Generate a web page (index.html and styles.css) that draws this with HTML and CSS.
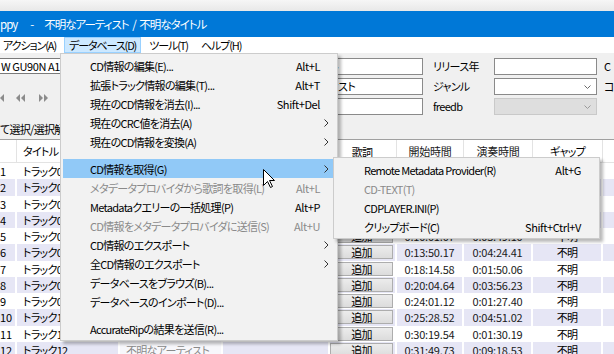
FILE: index.html
```html
<!DOCTYPE html>
<html lang="ja">
<head>
    <meta charset="UTF-8">
    <title>CD情報</title>
    <link rel="stylesheet" href="styles.css">
</head>
<body>
    <div class="topstrip"></div>
    <div class="titlebar"><span>ppy</span><span class="dash">-</span><span>不明なアーティスト / 不明なタイトル</span></div>
    <div class="menubar">
        <span class="mb-item first">アクション(A)</span>
        <span class="mb-item open">データベース(D)</span>
        <span class="mb-item">ツール(T)</span>
        <span class="mb-item">ヘルプ(H)</span>
    </div>

    <div class="panel">
        <div class="left">
            <div class="drive">W GU90N A1C</div>
            <svg class="transport" width="62" height="10" viewBox="0 0 62 10">
                <polygon points="4,1 0,5 4,9" fill="#8c8c8c"/>
                <polygon points="20,1 16,5 20,9" fill="#8c8c8c"/>
                <polygon points="25,1 21,5 25,9" fill="#8c8c8c"/>
                <polygon points="39,1 43,5 39,9" fill="#8c8c8c"/>
                <polygon points="44,1 48,5 44,9" fill="#8c8c8c"/>
            </svg>
            <div class="selectall">て選択/選択解除</div>
        </div>
        <div class="form">
            <div class="field">不明なタイトル</div>
            <div class="label">リリース年</div>
            <div class="field"></div>
            <div class="label edge">C</div>

            <div class="field">不明なアーティスト</div>
            <div class="label">ジャンル</div>
            <div class="field combo"><svg width="7" height="4" viewBox="0 0 7 4"><path d="M0.5 0.5 L3.5 3.5 L6.5 0.5" fill="none" stroke="#6a6a6a"/></svg></div>
            <div class="label edge">コ</div>

            <div class="field"></div>
            <div class="label">freedb</div>
            <div class="field combo disabled"><svg width="7" height="4" viewBox="0 0 7 4"><path d="M0.5 0.5 L3.5 3.5 L6.5 0.5" fill="none" stroke="#9a9a9a"/></svg></div>
            <div class="label edge"></div>
        </div>
    </div>

    <div class="tracks">
        <div class="row head">
            <div class="c num"></div>
            <div class="c title">タイトル</div>
            <div class="c artist">アーティスト</div>
            <div class="c composer">作曲者</div>
            <div class="c lyric center">歌詞</div>
            <div class="c time center">開始時間</div>
            <div class="c len center">演奏時間</div>
            <div class="c gap center">ギャップ</div>
            <div class="c more"></div>
        </div>
        <div class="row"><div class="c num">1</div><div class="c title">トラック01</div><div class="c artist">不明なアーティスト</div><div class="c composer"></div><div class="c lyric"><span class="btn">追加</span></div><div class="c time center">0:00:02.00</div><div class="c len center">0:03:25.15</div><div class="c gap center">不明</div><div class="c more"></div></div>
        <div class="row alt"><div class="c num">2</div><div class="c title">トラック02</div><div class="c artist">不明なアーティスト</div><div class="c composer"></div><div class="c lyric"><span class="btn">追加</span></div><div class="c time center">0:03:27.15</div><div class="c len center">0:02:58.40</div><div class="c gap center">不明</div><div class="c more"></div></div>
        <div class="row"><div class="c num">3</div><div class="c title">トラック03</div><div class="c artist">不明なアーティスト</div><div class="c composer"></div><div class="c lyric"><span class="btn">追加</span></div><div class="c time center">0:06:25.55</div><div class="c len center">0:01:44.30</div><div class="c gap center">不明</div><div class="c more"></div></div>
        <div class="row alt"><div class="c num">4</div><div class="c title">トラック04</div><div class="c artist">不明なアーティスト</div><div class="c composer"></div><div class="c lyric"><span class="btn">追加</span></div><div class="c time center">0:08:10.10</div><div class="c len center">0:01:50.72</div><div class="c gap center">不明</div><div class="c more"></div></div>
        <div class="row"><div class="c num">5</div><div class="c title">トラック05</div><div class="c artist">不明なアーティスト</div><div class="c composer"></div><div class="c lyric"><span class="btn">追加</span></div><div class="c time center">0:10:01.07</div><div class="c len center">0:03:49.10</div><div class="c gap center">不明</div><div class="c more"></div></div>
        <div class="row alt"><div class="c num">6</div><div class="c title">トラック06</div><div class="c artist">不明なアーティスト</div><div class="c composer"></div><div class="c lyric"><span class="btn">追加</span></div><div class="c time center">0:13:50.17</div><div class="c len center">0:04:24.41</div><div class="c gap center">不明</div><div class="c more"></div></div>
        <div class="row"><div class="c num">7</div><div class="c title">トラック07</div><div class="c artist">不明なアーティスト</div><div class="c composer"></div><div class="c lyric"><span class="btn">追加</span></div><div class="c time center">0:18:14.58</div><div class="c len center">0:01:50.06</div><div class="c gap center">不明</div><div class="c more"></div></div>
        <div class="row alt"><div class="c num">8</div><div class="c title">トラック08</div><div class="c artist">不明なアーティスト</div><div class="c composer"></div><div class="c lyric"><span class="btn">追加</span></div><div class="c time center">0:20:04.64</div><div class="c len center">0:03:56.23</div><div class="c gap center">不明</div><div class="c more"></div></div>
        <div class="row"><div class="c num">9</div><div class="c title">トラック09</div><div class="c artist">不明なアーティスト</div><div class="c composer"></div><div class="c lyric"><span class="btn">追加</span></div><div class="c time center">0:24:01.12</div><div class="c len center">0:01:27.40</div><div class="c gap center">不明</div><div class="c more"></div></div>
        <div class="row alt"><div class="c num">10</div><div class="c title">トラック10</div><div class="c artist">不明なアーティスト</div><div class="c composer"></div><div class="c lyric"><span class="btn">追加</span></div><div class="c time center">0:25:28.52</div><div class="c len center">0:04:51.02</div><div class="c gap center">不明</div><div class="c more"></div></div>
        <div class="row"><div class="c num">11</div><div class="c title">トラック11</div><div class="c artist">不明なアーティスト</div><div class="c composer"></div><div class="c lyric"><span class="btn">追加</span></div><div class="c time center">0:30:19.54</div><div class="c len center">0:01:30.19</div><div class="c gap center">不明</div><div class="c more"></div></div>
        <div class="row alt"><div class="c num">12</div><div class="c title">トラック12</div><div class="c artist">不明なアーティスト</div><div class="c composer"></div><div class="c lyric"><span class="btn">追加</span></div><div class="c time center">0:31:49.73</div><div class="c len center">0:09:18.53</div><div class="c gap center">不明</div><div class="c more"></div></div>
    </div>

    <!-- データベース menu -->
    <div class="menu main">
        <div class="mi"><span class="lbl">CD情報の編集(E)...</span><span class="key">Alt+L</span><span class="arr"></span></div>
        <div class="mi"><span class="lbl">拡張トラック情報の編集(T)...</span><span class="key">Alt+T</span><span class="arr"></span></div>
        <div class="mi"><span class="lbl">現在のCD情報を消去(I)...</span><span class="key">Shift+Del</span><span class="arr"></span></div>
        <div class="mi"><span class="lbl">現在のCRC値を消去(A)</span><span class="key"></span><span class="arr"><svg width="5" height="8" viewBox="0 0 5 8"><path d="M0.5 0.5 L4 4 L0.5 7.5" fill="none" stroke="#333"/></svg></span></div>
        <div class="mi"><span class="lbl">現在のCD情報を変換(A)</span><span class="key"></span><span class="arr"><svg width="5" height="8" viewBox="0 0 5 8"><path d="M0.5 0.5 L4 4 L0.5 7.5" fill="none" stroke="#333"/></svg></span></div>
        <div class="sep"></div>
        <div class="mi hot"><span class="lbl">CD情報を取得(G)</span><span class="key"></span><span class="arr"><svg width="5" height="8" viewBox="0 0 5 8"><path d="M0.5 0.5 L4 4 L0.5 7.5" fill="none" stroke="#333"/></svg></span></div>
        <div class="mi off"><span class="lbl">メタデータプロバイダから歌詞を取得(L)</span><span class="key">Alt+L</span><span class="arr"></span></div>
        <div class="mi"><span class="lbl">Metadataクエリーの一括処理(P)</span><span class="key">Alt+P</span><span class="arr"></span></div>
        <div class="mi off"><span class="lbl">CD情報をメタデータプロバイダに送信(S)</span><span class="key">Alt+U</span><span class="arr"></span></div>
        <div class="mi"><span class="lbl">CD情報のエクスポート</span><span class="key"></span><span class="arr"><svg width="5" height="8" viewBox="0 0 5 8"><path d="M0.5 0.5 L4 4 L0.5 7.5" fill="none" stroke="#333"/></svg></span></div>
        <div class="mi"><span class="lbl">全CD情報のエクスポート</span><span class="key"></span><span class="arr"><svg width="5" height="8" viewBox="0 0 5 8"><path d="M0.5 0.5 L4 4 L0.5 7.5" fill="none" stroke="#333"/></svg></span></div>
        <div class="mi"><span class="lbl">データベースをブラウズ(B)...</span><span class="key"></span><span class="arr"></span></div>
        <div class="mi"><span class="lbl">データベースのインポート(D)...</span><span class="key"></span><span class="arr"></span></div>
        <div class="sep"></div>
        <div class="mi"><span class="lbl">AccurateRipの結果を送信(R)...</span><span class="key"></span><span class="arr"></span></div>
    </div>

    <!-- CD情報を取得 submenu -->
    <div class="menu sub">
        <div class="mi"><span class="lbl">Remote Metadata Provider(R)</span><span class="key">Alt+G</span></div>
        <div class="mi off"><span class="lbl">CD-TEXT(T)</span><span class="key"></span></div>
        <div class="mi"><span class="lbl">CDPLAYER.INI(P)</span><span class="key"></span></div>
        <div class="mi"><span class="lbl">クリップボード(C)</span><span class="key">Shift+Ctrl+V</span></div>
    </div>

    <svg class="cursor" width="13" height="20" viewBox="0 0 13 20">
        <path d="M0.5 0.5 L0.5 16.5 L4.5 12.5 L7.5 18.5 L9.5 17.5 L6.5 11.5 L11.5 11.5 Z" fill="#fff" stroke="#000" stroke-linejoin="round"/>
    </svg>
</body>
</html>
```

FILE: styles.css
```css
* { box-sizing: border-box; }
body {
    margin: 0; width: 614px; height: 354px; overflow: hidden; position: relative;
    background: #f0f0f0; color: #000;
    font-family: "Noto Sans CJK JP", sans-serif; font-size: 11px;
    font-feature-settings: "palt"; letter-spacing: -0.7px;
}

.topstrip { height: 11px; background: linear-gradient(#f6f6f6, #e8e8e8); }
.titlebar { height: 26px; background: #0078d7; color: #fff; display: flex; align-items: center; font-size: 11.5px; letter-spacing: -1px; white-space: nowrap; word-spacing: 2px; }
.titlebar .dash { margin: 0 11px 0 13px; }

.menubar { height: 16px; background: #fff; display: flex; white-space: nowrap; letter-spacing: -1.1px; }
.mb-item { padding: 0 4px; height: 16px; line-height: 14px; border: 1px solid transparent; margin-right: 3px; }
.mb-item.first { margin-left: -2px; }
.mb-item.open { background: #cce8ff; border-color: #99d1ff; }

.panel { height: 86px; display: flex; padding-top: 5px; }
.left { width: 62px; flex: none; white-space: nowrap; }
.drive { height: 16px; background: #fff; border: 1px solid #7a7a7a; border-left: none; line-height: 14px; padding-left: 1px; letter-spacing: -0.4px; }
.transport { display: block; margin-top: 19px; }
.selectall { margin-top: 19px; line-height: 14px; }

.form { margin-left: 206px; display: grid; grid-template-columns: 155px 71px 103px 40px; grid-auto-rows: 17px; row-gap: 3px; white-space: nowrap; }
.field { background: #fff; border: 1px solid #8a8a8a; line-height: 15px; padding-left: 3px; overflow: hidden; }
.field.combo { display: flex; align-items: center; justify-content: flex-end; padding-right: 5px; }
.field.disabled { background: #dedede; border-color: #c9c9c9; }
.label { padding-left: 10px; line-height: 17px; }
.label.edge { padding-left: 7px; }

.tracks { border-top: 1px solid #a0a0a0; }
.row { display: flex; height: 16.27px; background: #fff; white-space: nowrap; }
.row.alt { background: #e6e6f5; }
.row.head { height: 23px; background: #fff; border-bottom: 1px solid #e3e3e3; }
.c { flex: none; border-right: 2px solid #fff; line-height: 16px; overflow: hidden; padding-left: 6px; }
.head .c { border-right: 1px solid #e3e3e3; line-height: 22px; }
.c.center { text-align: center; padding-left: 0; }
.c.num { width: 17px; padding-left: 0; letter-spacing: 0; }
.c.title { width: 103px; }
.c.artist { width: 103px; color: #8a8a8a; background: #f7f7fb; }
.head .c.artist { color: #000; background: #fff; }
.c.composer { width: 107px; }
.c.lyric { width: 67px; padding: 1px 2px 1px 0; }
.c.time { width: 67px; color: #1a1a1a; letter-spacing: -0.2px; }
.c.len { width: 69px; color: #1a1a1a; letter-spacing: -0.2px; }
.c.gap { width: 70px; }
.c.more { width: 60px; }
.btn { display: block; height: 14px; line-height: 12px; text-align: center; background: linear-gradient(#ececec, #dcdcdc); border: 1px solid #adadad; }

.menu { position: absolute; background: #f2f2f2; border: 1px solid #cccccc; padding: 2px 0; box-shadow: 3px 3px 3px rgba(0,0,0,0.28); white-space: nowrap; }
.menu.main { left: 60px; top: 53px; width: 278px; }
.menu.sub { left: 333px; top: 157px; width: 267px; }
.mi { display: flex; align-items: center; height: 19px; margin: 0 2px; padding-left: 27px; }
.mi .lbl { flex: 1; }
.mi .key { text-align: right; letter-spacing: -0.4px; }
.mi .arr { width: 15px; display: flex; align-items: center; padding-left: 4px; }
.sub .mi { padding-left: 28px; padding-right: 16px; }
.mi.hot { background: #91c9f7; }
.mi.off { color: #8a8a8a; }
.sep { height: 8px; }

.cursor { position: absolute; left: 263px; top: 169px; }
```
